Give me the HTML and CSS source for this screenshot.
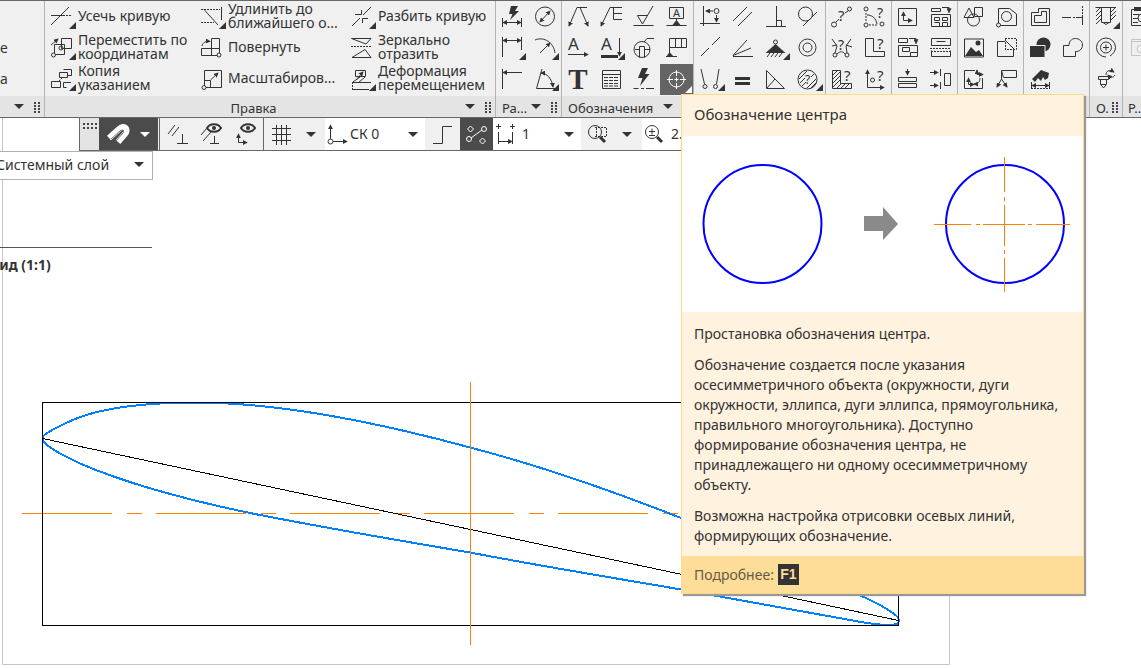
FILE: index.html
```html
<!DOCTYPE html>
<html lang="ru">
<head>
<meta charset="utf-8">
<title>Обозначение центра</title>
<link rel="stylesheet" href="styles.css">
</head>
<body>
<svg class="defs" aria-hidden="true">
  <defs>
    <marker id="arrow" viewBox="0 0 6 6" refX="5" refY="3" markerWidth="5" markerHeight="5" markerUnits="userSpaceOnUse" orient="auto-start-reverse"><path d="M0 0L6 3L0 6Z" fill="context-stroke"/></marker>
    <symbol id="corner" viewBox="0 0 7 7"><path d="M7 0V7H0Z"/></symbol>
  </defs>
</svg>

<header class="ribbon">
  <section class="group group-cut">
    <div class="cut-labels"><span></span><span>е</span><span>а</span></div>
    <footer class="foot"><i class="drop"></i><i class="grip"></i></footer>
  </section>

  <section class="group group-edit">
    <div class="commands">
      <button class="command"><svg class="icon" viewBox="0 0 21 21"><path d="M0 18L18 0M0 8.500h12"/><path class="dash" d="M12 8.500h9"/><use class="more" href="#corner" x="18" y="15" width="7" height="7"/></svg><span>Усечь кривую</span></button>
      <button class="command"><svg class="icon" viewBox="0 0 21 21"><path class="dash" d="M0 2.500h19M0 15.500h13"/><path d="M20.500 0v13M3 2.500L17 18"/><use class="more" href="#corner" x="18" y="15" width="7" height="7"/></svg><span>Удлинить до<br>ближайшего о...</span></button>
      <button class="command"><svg class="icon" viewBox="0 0 21 21"><path d="M1 19L9 11M12 8L20 0M4 7.500h6.500V3M11.500 16v-4.500H17"/><use class="more" href="#corner" x="18" y="15" width="7" height="7"/></svg><span>Разбить кривую</span></button>
      <button class="command"><svg class="icon" viewBox="0 0 21 21"><path d="M10.500 .5h10v10h-10zM3.500 6.500h10v10h-10z"/><path class="ar" d="M0 7L7 1"/><circle cx="10" cy="10" r="2"/><circle class="hole" cx="2.500" cy="17" r="2"/><use class="more" href="#corner" x="18" y="15" width="7" height="7"/></svg><span>Переместить по<br>координатам</span></button>
      <button class="command"><svg class="icon" viewBox="0 0 21 21"><path d="M10.500 .5h8v17h-8zM.5 10.500h18M.5 10.500v7h17"/><path class="ar" d="M1 8C2 4 5 3 9 3.500"/><circle class="hole" cx="18" cy="17" r="2"/></svg><span>Повернуть</span></button>
      <button class="command"><svg class="icon" viewBox="0 0 21 21"><path class="dash" d="M0 8.500h21"/><path d="M.5 .5H20L15 6ZM1 19.500L14 11.500L20 19.500Z"/></svg><span>Зеркально<br>отразить</span></button>
      <button class="command"><svg class="icon" viewBox="0 0 21 21"><path d="M12.500 .5h8v6h-4M8.500 3.500h8v5h-8zM.5 12.500h9v6h-9zM20 13.500h-7.500v5h3"/><path class="dash" d="M8 12L11 9"/><use class="more" href="#corner" x="18" y="15" width="7" height="7"/></svg><span>Копия<br>указанием</span></button>
      <button class="command"><svg class="icon" viewBox="0 0 21 21"><path d="M3.500 1.500h17v17h-17zM3.500 11.500h6v7"/><path class="ar" d="M9.500 11L17 4"/><circle class="hole" cx="3" cy="18.500" r="2"/></svg><span>Масштабиров...</span></button>
      <button class="command"><svg class="icon" viewBox="0 0 21 21"><path d="M4.500 1.500h10v6h-10zM1 13.500h19M1 20.500h17M2 13L9 8M7 14L14 8"/><path class="ar" d="M5 11L12 3"/><path class="dash" d="M1.500 13v7"/><use class="more" href="#corner" x="18" y="15" width="7" height="7"/></svg><span>Деформация<br>перемещением</span></button>
    </div>
    <footer class="foot"><span class="name">Правка</span><i class="drop"></i><i class="grip"></i></footer>
  </section>

  <section class="group">
    <div class="tools two">
      <button class="tool" aria-label="Авторазмер"><svg class="icon" viewBox="0 0 21 21"><path d="M1.500 11v9M20.500 11v9"/><path class="arr" d="M2 15.500h18"/><path class="fill" d="M10-1h7l-3 5h4l-9 9 2.500-6H8z"/></svg></button>
      <button class="tool" aria-label="Диаметр"><svg class="icon" viewBox="0 0 21 21"><circle cx="11" cy="9.500" r="9.500"/><path class="arr" d="M6 15L16 4"/></svg></button>
      <button class="tool" aria-label="Линейный размер"><svg class="icon" viewBox="0 0 21 21"><path d="M1.500-1v20M20.500-1v13"/><path class="arr" d="M2 2.500h18"/><use class="more" href="#corner" x="18" y="15" width="7" height="7"/></svg></button>
      <button class="tool" aria-label="Радиус"><svg class="icon" viewBox="0 0 21 21"><path d="M1 2C10-2 20 5 21 15"/><path class="ar" d="M6 15L16 5"/><use class="more" href="#corner" x="18" y="15" width="7" height="7"/></svg></button>
      <button class="tool" aria-label="Размер с обрывом"><svg class="icon" viewBox="0 0 21 21"><path d="M1.500 0v20"/><path class="ar" d="M21 3.500H2"/></svg></button>
      <button class="tool" aria-label="Угловой размер"><svg class="icon" viewBox="0 0 21 21"><path d="M8 0L2.500 19.500H21"/><path class="arr" d="M7 4C13 4 18 10 19 18"/><use class="more" href="#corner" x="18" y="15" width="7" height="7"/></svg></button>
    </div>
    <footer class="foot"><span class="name">Ра...</span><i class="drop"></i><i class="grip"></i></footer>
  </section>

  <section class="group">
    <div class="tools four">
      <button class="tool" aria-label="Линия-выноска"><svg class="icon" viewBox="0 0 21 21"><path d="M10 .5h10"/><path class="ar" d="M10 .5L2 19"/><path class="ar" d="M13 .5L21 19"/></svg></button>
      <button class="tool" aria-label="Позиция"><svg class="icon" viewBox="0 0 21 21"><path class="ar" d="M22 .5H10L1 19"/><path d="M13.500 .5v12H22M13.500 6.500H22"/></svg></button>
      <button class="tool" aria-label="Шероховатость"><svg class="icon" viewBox="0 0 21 21"><path d="M.5 18.500h20M4.500 8.500H15M4.500 8.500L9.500 17L20-1"/></svg></button>
      <button class="tool" aria-label="База"><svg class="icon" viewBox="0 0 21 21"><path d="M3.500 .5h14v11h-14zM10.500 11v7M.5 18.500h20"/><path class="fill" d="M10.500 13l4 5h-8z"/><text x="10.500" y="10" font-size="11" text-anchor="middle">A</text></svg></button>
      <button class="tool" aria-label="Линия разреза"><svg class="icon" viewBox="0 0 21 21"><text x="1" y="12" font-size="17">A</text><path class="ar" d="M1 16.500h20"/></svg></button>
      <button class="tool" aria-label="Стрелка взгляда"><svg class="icon" viewBox="0 0 21 21"><text x="1" y="12" font-size="17">A</text><path class="fill" d="M1 17h17v3H1z"/><path class="ar" d="M19.500 0v18"/><use class="more" href="#corner" x="18" y="15" width="7" height="7"/></svg></button>
      <button class="tool" aria-label="Выносной элемент"><svg class="icon" viewBox="0 0 21 21"><circle cx="9" cy="11.500" r="8"/><path d="M6.500 8.500h5v11M6.500 8.500v11M2 11.500h4M12 11.500h5M11 4L14 .5h7"/></svg></button>
      <button class="tool" aria-label="Допуск формы"><svg class="icon" viewBox="0 0 21 21"><path d="M3.500 18V.5h17v9h-17M9.500 .5v9M15.500 .5v9M0 18.500h11"/><path class="fill" d="M3.500 14l4 4.500h-7z"/></svg></button>
      <button class="tool" aria-label="Текст"><svg class="icon" viewBox="0 0 21 21"><text class="serif" x="11" y="20" font-size="29" text-anchor="middle">T</text></svg></button>
      <button class="tool" aria-label="Таблица"><svg class="icon" viewBox="0 0 21 21"><path d="M2.500 1.500h18v18h-18zM2.500 5.500h18"/><path class="dash-cell" d="M4 8.500h15M4 11.500h15M4 14.500h15M4 17h15"/></svg></button>
      <button class="tool" aria-label="Неуказанная шероховатость"><svg class="icon" viewBox="0 0 21 21"><path class="fill" d="M9-1h6l-3 6h4.500L7 17l2.500-8H5z"/><path d="M.5 19.500h5M8 19.500h3M13 19.500h8"/></svg></button>
      <button class="tool active" aria-label="Обозначение центра" aria-describedby="tip"><svg class="icon" viewBox="0 0 21 21"><circle cx="10.500" cy="10.500" r="7.500"/><path d="M1 10.500h6M8.500 10.500h4M14 10.500h6M10.500 1v6M10.500 8.500v4M10.500 14v6"/><use class="more" href="#corner" x="19" y="17" width="7" height="7"/></svg></button>
    </div>
    <footer class="foot"><span class="name">Обозначения</span><i class="drop"></i><i class="grip"></i></footer>
  </section>

  <section class="group">
    <div class="tools four">
      <button class="tool" aria-label="Выравнивание"><svg class="icon" viewBox="0 0 21 21"><path d="M4.500-1v20M1 16.500h20"/><circle cx="17.500" cy="4" r="2.500"/><path class="ar" d="M14 4H7"/><path class="ar" d="M17.500 8v7"/></svg></button>
      <button class="tool" aria-label="Параллельность"><svg class="icon" viewBox="0 0 21 21"><path d="M1 14L15 0M6 19L20 5"/></svg></button>
      <button class="tool" aria-label="Перпендикулярность"><svg class="icon" viewBox="0 0 21 21"><path d="M1 19.500h20M11.500-1v20M11.500 13.500h5v6"/></svg></button>
      <button class="tool" aria-label="Касание"><svg class="icon" viewBox="0 0 21 21"><circle cx="7.500" cy="7" r="7"/><path d="M5 19L19 5"/></svg></button>
      <button class="tool" aria-label="Коллинеарность"><svg class="icon" viewBox="0 0 21 21"><path d="M2 18L10 10M13 7L21-1"/></svg></button>
      <button class="tool" aria-label="Биссектриса"><svg class="icon" viewBox="0 0 21 21"><path d="M15 2L1 17.500L19 10M1 18.500h20"/></svg></button>
      <button class="tool" aria-label="Фиксация"><svg class="icon" viewBox="0 0 21 21"><circle cx="10.500" cy="4" r="2"/><path class="fill" d="M10.500 6l10 9h-20z"/><path d="M2 19l3-4M6 19l3-4M10 19l3-4M14 19l3-4"/><use class="more" href="#corner" x="18" y="15" width="7" height="7"/></svg></button>
      <button class="tool" aria-label="Концентричность"><svg class="icon" viewBox="0 0 21 21"><circle cx="9.500" cy="9.500" r="8.500"/><circle cx="9.500" cy="9.500" r="4.500"/></svg></button>
      <button class="tool" aria-label="Совпадение"><svg class="icon" viewBox="0 0 21 21"><path d="M2 0L5.500 15M20 0L17.500 15"/><circle class="hole" cx="6" cy="17.500" r="2"/><circle class="hole" cx="16.500" cy="17.500" r="2"/><use class="more" href="#corner" x="19" y="15" width="7" height="7"/></svg></button>
      <button class="tool" aria-label="Равенство"><svg class="icon" viewBox="0 0 21 21"><path class="fill" d="M3 8h15v3H3zM3 13h15v3H3z"/></svg></button>
      <button class="tool" aria-label="Прямой угол"><svg class="icon" viewBox="0 0 21 21"><path d="M1.500 1.500v18h18zM2 19L10 10"/></svg></button>
      <button class="tool" aria-label="Штриховка"><svg class="icon" viewBox="0 0 21 21"><circle cx="9.500" cy="10.500" r="9.500"/><path d="M1 10L9 2M2 14L7 9M4 17L8 13M9 19L18 10M13 19L18 14M13 8L16 5"/><text x="7" y="15" font-size="12">?</text><use class="more" href="#corner" x="18" y="15" width="7" height="7"/></svg></button>
    </div>
    <footer class="foot"></footer>
  </section>

  <section class="group">
    <div class="tools two">
      <button class="tool" aria-label="Расстояние"><svg class="icon" viewBox="0 0 21 21"><circle cx="3" cy="17.500" r="2.500"/><circle cx="18.500" cy="2" r="2"/><path d="M5 15l3-3M14 6l3-2"/><text x="7" y="14" font-size="15">?</text></svg></button>
      <button class="tool" aria-label="Длина кривой"><svg class="icon" viewBox="0 0 21 21"><circle cx="2" cy="2" r="2"/><circle cx="2" cy="18" r="2"/><circle cx="18" cy="17" r="2"/><path d="M3 8C8 8 12 11 13 17"/><path class="dash" d="M2 6v9M5 18h9"/><text x="13" y="11" font-size="14">?</text></svg></button>
      <button class="tool" aria-label="Площадь"><svg class="icon" viewBox="0 0 21 21"><circle cx="4" cy="17" r="2"/><circle cx="16" cy="17" r="2"/><path d="M1 1L6 8L4 15M20 1L15 8L16 15M6 16C9 13 12 13 14 16M1 8l5-1M15 7l6 2"/><text x="7" y="12" font-size="14">?</text></svg></button>
      <button class="tool" aria-label="Периметр"><svg class="icon" viewBox="0 0 21 21"><path d="M1.500 .5h8v13h11v5h-19z"/><text x="13" y="11" font-size="15">?</text></svg></button>
      <button class="tool" aria-label="МЦХ"><svg class="icon" viewBox="0 0 21 21"><path d="M1.500 1.500h8v13h11v5h-19zM2 6l5-5M2 10l7-7M2 14l7-7M2 18l7-7M6 19l5-5M10 19l5-5M14 19l5-5"/><text x="13" y="12" font-size="15">?</text></svg></button>
      <button class="tool" aria-label="Координаты точки"><svg class="icon" viewBox="0 0 21 21"><path class="arr" d="M3.500 1v17.500H20"/><circle cx="8.500" cy="11" r="2"/><text x="13" y="12" font-size="15">?</text></svg></button>
    </div>
    <footer class="foot"></footer>
  </section>

  <section class="group">
    <div class="tools two">
      <button class="tool" aria-label="Вид"><svg class="icon" viewBox="0 0 21 21"><path d="M1.500 1.500h18v17h-18z"/><path class="arr" d="M6.500 5v8.500H15"/></svg></button>
      <button class="tool" aria-label="Макроэлемент"><svg class="icon" viewBox="0 0 21 21"><path d="M1.500 1.500h9v3h-9zM1.500 7.500h19v12h-19zM4.500 10.500h5v3h-5zM12.500 10.500h5v3h-5zM4.500 15.500h5v4M12.500 19.500v-4h5v4"/><path class="ar" d="M12 .5h7v5"/></svg></button>
      <button class="tool" aria-label="Слой"><svg class="icon" viewBox="0 0 21 21"><path d="M1.500 .5h9v4h-9zM1.500 7.500h19v11h-19zM5.500 9.500h7v4h-7zM13.500 18.500v-4h7"/><path class="ar" d="M12 .5h7v5"/></svg></button>
      <button class="tool" aria-label="Разрыв вида"><svg class="icon" viewBox="0 0 21 21"><path d="M1.500 .5h19v7h-19zM6.500 3.500h9M1.500 18.500v-6M20.500 18.500v-6M1.500 18.500h19"/><path class="dash" d="M0 10.500h21M1 13.500h19"/></svg></button>
      <button class="tool" aria-label="Выровнять"><svg class="icon" viewBox="0 0 21 21"><path d="M1.500 8.500h18v4h-18zM1.500 14.500h18v4h-18z"/><path class="ar" d="M10.500 0v6"/></svg></button>
      <button class="tool" aria-label="Сместить"><svg class="icon" viewBox="0 0 21 21"><path d="M10.500 0v7M10.500 13v7M14.500 4.500h6v12h-6z"/><path class="ar" d="M0 3.500h8"/><path class="ar" d="M0 16.500h8"/></svg></button>
    </div>
    <footer class="foot"></footer>
  </section>

  <section class="group">
    <div class="tools two">
      <button class="tool" aria-label="Фигуры"><svg class="icon" viewBox="0 0 21 21"><path d="M6 1L1 10.500h10zM11.500 .5h8v9h-8z"/><circle cx="10.500" cy="13" r="6"/></svg></button>
      <button class="tool" aria-label="Контур"><svg class="icon" viewBox="0 0 21 21"><path d="M2.500 17V1.500h11L20.500 7v11.500H4"/><circle cx="10.500" cy="9.500" r="5"/><circle class="hole" cx="2.500" cy="18" r="2"/></svg></button>
      <button class="tool" aria-label="Рисунок"><svg class="icon" viewBox="0 0 21 21"><path d="M1.500 1h19v18h-19z"/><path class="fill" d="M2 18L8 9L13 14L16 12L20 18Z"/><circle class="fill" cx="15" cy="5" r="2.500"/></svg></button>
      <button class="tool" aria-label="Фрагмент"><svg class="icon" viewBox="0 0 21 21"><path d="M9 3.500H1.500v15h16V11M9 2L18 11"/><path class="dash" d="M9 .5h11.500v11H9M9.500 1v10"/></svg></button>
      <button class="tool" aria-label="Система координат"><svg class="icon" viewBox="0 0 21 21"><path d="M12 1.500H1.500v18h18V9"/><path class="arr" d="M5.500 9v6.500H11"/><path class="arr" d="M14 1v4.500h6"/><path class="ar" d="M17 9C17 13 15 15 11 15"/></svg></button>
      <button class="tool" aria-label="Обозначение вида"><svg class="icon" viewBox="0 0 21 21"><path d="M5.500 1.500h15v7h-13z"/><path class="ar" d="M5.500 2v8L1 18"/><path class="ar" d="M5.500 10L11 18"/></svg></button>
    </div>
    <footer class="foot"></footer>
  </section>

  <section class="group">
    <div class="tools two">
      <button class="tool" aria-label="Эквидистанта"><svg class="icon" viewBox="0 0 21 21"><path d="M2.500 18.500v-13h7v-4h11v17zM5.500 15.500v-7h7v-4h5v11z"/></svg></button>
      <button class="tool" aria-label="Осевая линия"><svg class="icon" viewBox="0 0 21 21"><path d="M0 10.500h9M11 10.500h2M14 10.500h6M20.500 10v8"/><path class="dash" d="M20.500-1v11"/></svg></button>
      <button class="tool" aria-label="Область"><svg class="icon" viewBox="0 0 21 21"><circle class="fill" cx="14.500" cy="6.500" r="7"/><path class="fill cut" d="M.5 7.500h15.500v12H.5z"/></svg></button>
      <button class="tool" aria-label="Объединение"><svg class="icon" viewBox="0 0 21 21"><path d="M7 7.500H1.500v11h12v-5C17 14 20.500 11 20.500 7C20.500 3 17 .5 13.500 .5C9 .5 7 4 7 7.500Z"/></svg></button>
      <button class="tool" aria-label="Очистить размеры"><svg class="icon" viewBox="0 0 21 21"><path class="fill" d="M3 10L12 1L20 4L19 9L16 11L14 8L12 12L9 9L6 13Z"/><path d="M2.500 13v7M20.500 13v7"/><path class="arr" d="M3 16.500h17"/><path class="dash" d="M2 19.500h18"/></svg></button>
    </div>
    <footer class="foot"><i class="grip"></i></footer>
  </section>

  <section class="group">
    <div class="tools one">
      <button class="tool" aria-label="Отверстие"><svg class="icon" viewBox="0 0 21 21"><path d="M6.500 0v15.500h9V0M.5 .5h20M8 15.500l3 2 3-2M1 5l5-5M1 9l5-5M1 13l5-5M1 17l5-5M16 5l5-5M16 9l5-5M16 13l5-5"/><use class="more" href="#corner" x="18" y="15" width="7" height="7"/></svg></button>
      <button class="tool" aria-label="Резьба"><svg class="icon" viewBox="0 0 21 21"><circle cx="11" cy="9.500" r="5.500"/><path d="M8 9.500h6M11 6.500v6M11 19A9.500 9.500 0 1 1 20.500 9.500C20.500 13 18 16 15 18"/></svg></button>
      <button class="tool" aria-label="Обновить крепёж"><svg class="icon" viewBox="0 0 21 21"><path d="M3.500 7.500h10v3h-10zM5.500 10.500v5h6v-5M6 16l2.500 3 2.500-3"/><path class="ar" d="M11 6C11 2 14 0 19 3"/><path class="ar" d="M20 6C18 9 16 9 13 6"/></svg></button>
    </div>
    <footer class="foot"><span class="name">О.</span><i class="grip"></i></footer>
  </section>

  <section class="group group-last">
    <div class="tools one">
      <button class="tool" aria-label="Свойства"><svg class="icon" viewBox="0 0 21 21"><path d="M3.500 2.500h15v16h-15zM5 7.500h6M5 11.500h5M5 15.500h5"/><path class="fill" d="M6 0h8v4H6z"/><circle cx="14" cy="11" r="4"/></svg></button>
      <button class="tool" disabled aria-label="Просмотр"><svg class="icon" viewBox="0 0 21 21"><path d="M3.500 1.500h17v16h-17zM3.500 3.500h17"/><circle cx="13" cy="11" r="4"/></svg></button>
    </div>
    <footer class="foot"><span class="name">Р...</span></footer>
  </section>
</header>

<main class="stage">
  <svg class="drawing" aria-label="Чертёж">
    <g transform="translate(0 -118)">
      <path class="sheet" d="M2.500 118V664.500H949.500V118"/>
      <path class="view-line" d="M0 247.500H152"/>
      <path class="axis" stroke-dasharray="90 15 15 14" d="M22 513.500H760"/>
      <path class="profile" d="M42.500 438C42.500 434 70 419 95 412.500C125 405 160 402.500 195 402.500C280 402.500 380 423 470 447.500C545 467 615 492 681 518C740 541 800 566 857 594C880 604 899 615 899 620C899 624 895 625 890 625C880 625 860 622 850 620L681 589.500C600 575.500 540 566 470 552.500C390 539 320 527 250 513C190 500.500 130 485 80 463.500C60 454 42.500 445 42.500 438Z"/>
      <path class="thin" d="M42.500 402.500H898.500V625.500H42.500ZM42.500 438.500L898.500 620.500"/>
      <path class="axis" d="M470.500 382V645"/>
    </g>
  </svg>

  <nav class="quickbar" aria-label="Быстрый доступ">
    <div class="handle"><svg class="dots" viewBox="0 0 14 6"><path d="M0 1h14M0 5h14"/></svg></div>
    <button class="quick dark magnet" aria-label="Привязки"><svg class="icon magnet-icon" viewBox="0 0 21 21"><path class="magnet-body" d="M2 14L12 5C18 0 22 6 18 10L11 18"/><path class="magnet-gap" d="M4 15L13 7C16 5 18 7 16 9L9 17"/></svg><i class="drop"></i></button>
    <div class="quick-set">
      <button class="quick" aria-label="Параллельно и перпендикулярно"><svg class="icon" viewBox="0 0 21 21"><path d="M1 10L8 1M5 12L12 3M15.500 10v10M10 19.500h11"/></svg></button>
      <button class="quick" aria-label="Показать ограничения"><svg class="icon" viewBox="0 0 21 21"><path d="M0 11L6 4M2 17L10 8M13.500 12v7M9 19.500h9"/><path class="eye" d="M6 4C9-1 17-1 20 4C17 9 9 9 6 4Z"/><circle class="fill" cx="13" cy="4" r="2"/></svg></button>
      <button class="quick" aria-label="Показать оси"><svg class="icon" viewBox="0 0 21 21"><path class="arr" d="M3.500 10v8.500H12"/><path class="eye" d="M6 4C9-1 17-1 20 4C17 9 9 9 6 4Z"/><circle class="fill" cx="13" cy="4" r="2"/></svg></button>
    </div>
    <button class="quick grid-button" aria-label="Сетка"><svg class="icon" viewBox="0 0 21 21"><path d="M5.500 1v20M10.500 1v20M15.500 1v20M1 4.500h19M1 10.500h19M1 16.500h19"/></svg><i class="drop"></i></button>
    <label class="field field-cs"><svg class="icon" viewBox="0 0 21 21"><path class="arr" d="M3.500 1v16.500H20"/><circle class="hole" cx="3.500" cy="17.500" r="2.500"/></svg><select aria-label="Система координат"><option>СК 0</option></select><i class="drop"></i></label>
    <button class="quick step" aria-label="Ортогональное черчение"><svg class="icon" viewBox="0 0 21 21"><path d="M1 19.500h9.500v-17H20"/></svg></button>
    <button class="quick dark snap" aria-label="Скругление"><svg class="icon" viewBox="0 0 21 21"><path d="M5 14L16 6"/><circle cx="3" cy="15" r="2.500"/><circle cx="18" cy="5" r="2.500"/><path d="M4.500 2l3 3-3 3-3-3zM16.500 14l3 3-3 3-3-3z"/></svg></button>
    <label class="field field-step"><svg class="icon" viewBox="0 0 21 21"><path d="M3.500 0v5M1 2.500h5M17.500 0v5M15 2.500h5M3.500 8v12M17.500 8v12"/><path class="ar" d="M4 17.500h13"/></svg><select aria-label="Шаг курсора"><option>1</option></select><i class="drop"></i></label>
    <button class="quick zoom-area" aria-label="Показать рамкой"><svg class="icon" viewBox="0 0 21 21"><circle cx="8" cy="8" r="6.500"/><path class="thick" d="M13 13L18 18"/><path class="dash" d="M8 3.500h12M8 12.500h12M19.500 4v9M9.500 4v8"/></svg><i class="drop"></i></button>
    <label class="field field-scale"><svg class="icon" viewBox="0 0 21 21"><circle cx="8" cy="8" r="6.500"/><path d="M5 7.500h6M8 4.500v6M5 11.500h6"/><path class="thick" d="M13 13L18 18"/></svg><select aria-label="Масштаб"><option>2.</option></select></label>
  </nav>

  <label class="layer"><select aria-label="Слой"><option>Системный слой</option></select><i class="drop"></i></label>
  <h2 class="view-name">Вид (1:1)</h2>
</main>

<aside class="tip" id="tip" role="tooltip">
  <h1 class="tip-title">Обозначение центра</h1>
  <svg class="tip-picture" viewBox="0 0 401 176">
    <circle class="sample" cx="80.500" cy="88" r="59"/>
    <path class="next" d="M182 80h19v-9l15 17-15 16v-9h-19z"/>
    <circle class="sample" cx="323" cy="88" r="59"/>
    <path class="sample-axis" d="M252 88.500h37M294 88.500h4M301 88.500h42M346 88.500h4M354 88.500h34M322.500 21v35M322.500 61v4M322.500 69v41M322.500 114v4M322.500 122v34"/>
  </svg>
  <div class="tip-text">
    <p>Простановка обозначения центра.</p>
    <p>Обозначение создается после указания осесимметричного объекта (окружности, дуги окружности, эллипса, дуги эллипса, прямоугольника, правильного многоугольника). Доступно формирование обозначения центра, не принадлежащего ни одному осесимметричному объекту.</p>
    <p>Возможна настройка отрисовки осевых линий, формирующих обозначение.</p>
  </div>
  <footer class="tip-more">Подробнее: <kbd>F1</kbd></footer>
</aside>
</body>
</html>
```
FILE: styles.css
```css
* { box-sizing: border-box; }
body {
  margin: 0;
  height: 100vh;
  display: flex;
  flex-direction: column;
  overflow: hidden;
  position: relative;
  background: #fff;
  color: #333;
  font: 14px/20px "Noto Sans", "Open Sans", sans-serif;
}
button, select { font: inherit; color: inherit; border: 0; padding: 0; margin: 0; background: none; }
h1, h2, p { margin: 0; font: inherit; }
.defs { position: absolute; width: 0; height: 0; }

/* icons */
.icon { width: 21px; height: 21px; flex: none; display: block; overflow: visible; fill: none; stroke: currentColor; stroke-width: 1; }
.icon text { fill: currentColor; stroke: none; font-family: "Noto Sans", sans-serif; }
.icon .serif { font-family: "Liberation Serif", serif; font-weight: bold; }
.icon .fill, .icon .more { fill: currentColor; stroke: none; }
.icon .cut { stroke: #f0f0f0; stroke-width: 1; }
.icon .hole { fill: #f0f0f0; }
.icon .dash { stroke-dasharray: 2 1; }
.icon .dash-cell { stroke-dasharray: 4 1; }
.icon .thick { stroke-width: 3; }
.icon .eye { fill: #f0f0f0; stroke-width: 2; }
.ar { marker-end: url(#arrow); }
.arr { marker-start: url(#arrow); marker-end: url(#arrow); }
.drop { flex: none; width: 0; height: 0; border: 5px solid transparent; border-top-color: currentColor; border-bottom: 0; }
.grip {
  flex: none;
  width: 6px;
  height: 12px;
  background: repeating-linear-gradient(#e4e4e4 0 1px, transparent 1px 3px), linear-gradient(90deg, #444 2px, transparent 2px 4px, #444 4px);
}
.dots { display: block; width: 14px; height: 6px; stroke: #444; stroke-width: 2; stroke-dasharray: 2 2; }

/* ribbon */
.ribbon { flex: none; display: flex; overflow: hidden; background: #f0f0f0; border-top: 1px solid #6b6769; border-bottom: 1px solid #6b6769; }
.group { flex: none; display: flex; flex-direction: column; box-shadow: inset 1px 0 #b4b4b4; }
.group-cut { width: 44px; box-shadow: none; }
.group-edit { width: 451px; }
.group-last { flex: 1 0 33px; }
.commands, .tools, .cut-labels { display: grid; grid-template-rows: repeat(3, 31px); padding: 1px 0; }
.cut-labels { align-items: center; }
.cut-labels span { padding-bottom: 2px; }
.commands { grid-template-columns: repeat(3, 150px); padding-left: 1px; }
.command { display: flex; align-items: center; gap: 6px; padding-left: 6px; text-align: left; white-space: nowrap; line-height: 14px; }
.command span { padding-bottom: 3px; }
.tools { flex: 1; }
.one { grid-template-columns: 33px; }
.two { grid-template-columns: repeat(2, 33px); }
.four { grid-template-columns: repeat(4, 33px); }
.tool { display: grid; place-items: center; }
.tool.active { background: #646464; color: #fff; }
.tool:disabled { color: #c4c4c4; }
.foot { width: 0; min-width: 100%; height: 21px; display: flex; align-items: center; justify-content: flex-end; gap: 10px; padding: 0 4px; background: #e4e4e4; box-shadow: inset 1px 0 #b4b4b4; font-size: 13px; }
.foot .name { flex: 1; min-width: 0; padding-left: 2px; padding-top: 3px; text-align: left; line-height: 18px; white-space: nowrap; }
.foot .name:not(:last-child) { padding-left: 3px; }
.group-edit .foot .name { text-align: center; padding-left: 4px; }
.group-cut .foot { box-shadow: none; }

/* drawing area */
.stage { flex: 1; min-height: 0; position: relative; overflow: hidden; }
.drawing { position: absolute; inset: 0; width: 100%; height: 100%; fill: none; }
.sheet { stroke: #c8c8c8; }
.view-line { stroke: #555; }
.axis { stroke: #ff8000; }
.profile { stroke: #0080ff; stroke-width: 2; shape-rendering: crispEdges; }
.thin { stroke: #000; shape-rendering: crispEdges; }
.view-name { position: relative; margin-left: -10px; margin-top: 75px; font-weight: bold; }

/* quick access bar */
.quickbar { position: relative; display: flex; width: max-content; margin-left: 79px; height: 33px; background: #f0f0f0; border-left: 1px solid #6b6769; border-bottom: 1px solid #6b6769; }
.handle { width: 19px; padding: 5px 3px; background: #e4e4e4; }
.quick { display: flex; align-items: center; justify-content: center; gap: 12px; width: 35px; }
.quick.dark { background: #4b4b4b; color: #fff; }
.quick.magnet { width: 59px; }
.magnet-icon .magnet-body { stroke: #fff; stroke-width: 6; }
.magnet-icon .magnet-gap { stroke: #777; stroke-width: 1; }
.quick-set { display: flex; width: 105px; margin-left: 1px; border-left: 1px solid #6b6769; border-right: 1px solid #6b6769; }
.quick.grid-button { width: 61px; gap: 14px; padding-right: 2px; }
.quick.snap { width: 33px; }
.quick.zoom-area { width: 61px; gap: 14px; }
.zoom-area .icon { margin-left: -4px; }
.field { display: flex; align-items: center; gap: 2px; background: #fff; padding: 0 7px 0 2px; }
.field select, .layer select { appearance: none; flex: 1; min-width: 0; outline: 0; }
.field .icon .hole { fill: #fff; }
.field-cs { width: 100px; }
.field-step { width: 88px; gap: 6px; }
.field-scale { width: 56px; gap: 6px; }

.layer { position: relative; display: flex; align-items: center; width: 161px; height: 29px; margin-left: -8px; padding: 0 8px 2px 3px; background: #fff; border: 1px solid #b0b0b0; }

/* tooltip */
.tip { position: absolute; left: 681px; top: 94px; width: 403px; border: 1px solid #fcd98c; background: #fff2df; box-shadow: 2px 2px 1px #999; }
.tip-title { padding: 9px 12px 12px; font-size: 15px; }
.tip-picture { display: block; width: 100%; background: #fff; fill: none; }
.sample { stroke: #00f; stroke-width: 2; }
.sample-axis { stroke: #ff8000; }
.next { fill: #8a8a8a; }
.tip-text { display: flex; flex-direction: column; gap: 11px; padding: 12px 12px 10px; }
.tip-more { display: flex; align-items: center; gap: 4px; height: 37px; padding: 0 12px; background: #fddd98; color: #665b45; }
.tip-more kbd { width: 21px; height: 21px; background: #333; color: #fddd98; text-align: center; font: bold 14px/21px "Liberation Sans", sans-serif; }
```
